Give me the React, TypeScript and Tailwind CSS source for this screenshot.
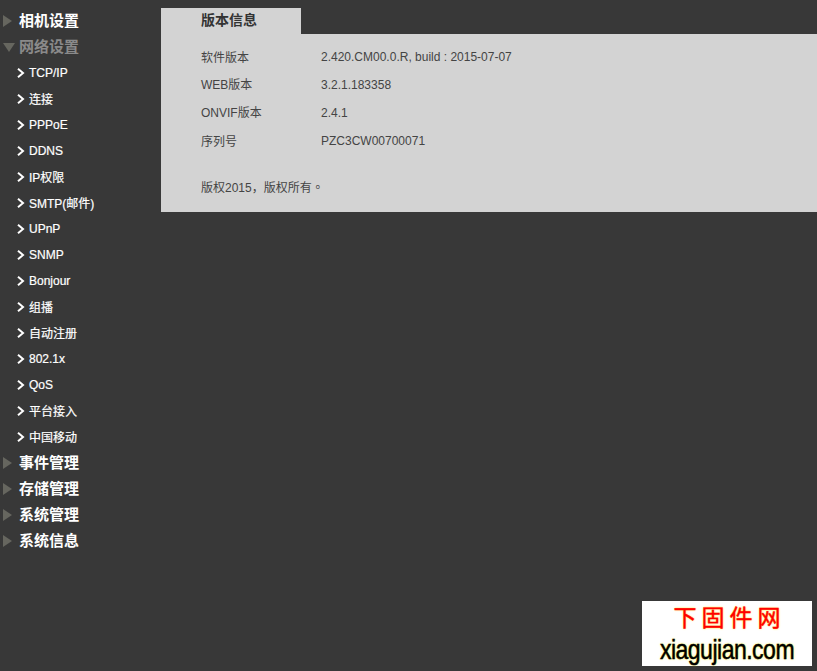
import { FC } from "react";

const FONT = "font-['Liberation_Sans','Noto_Sans_CJK_SC',sans-serif]";

const subItems = [
  "TCP/IP",
  "连接",
  "PPPoE",
  "DDNS",
  "IP权限",
  "SMTP(邮件)",
  "UPnP",
  "SNMP",
  "Bonjour",
  "组播",
  "自动注册",
  "802.1x",
  "QoS",
  "平台接入",
  "中国移动",
];

const versionRows = [
  ["软件版本", "2.420.CM00.0.R, build : 2015-07-07"],
  ["WEB版本", "3.2.1.183358"],
  ["ONVIF版本", "2.4.1"],
  ["序列号", "PZC3CW00700071"],
];

// the CJK fallback sits a pixel higher than in the original page
const hasCjk = (s: string) => /[^\x00-\x7f]/.test(s);
const isAllCjk = (s: string) => /^[^\x00-\x7f]+$/.test(s);

const Section: FC<{ label: string; open?: boolean }> = ({ label, open }) => (
  <div className="flex h-[26px] items-center">
    {open ? (
      <span className="ml-[3px] h-0 w-0 border-x-[6px] border-t-[9px] border-x-transparent border-t-[#66665f]" />
    ) : (
      <span className="ml-[3px] h-0 w-0 border-y-[6px] border-l-[9px] border-y-transparent border-l-[#66665f]" />
    )}
    <span
      className={`text-[15px] font-bold ${open ? "ml-[4px] text-[#8a8a8a]" : "ml-[7px] text-white"}`}
    >
      {label}
    </span>
  </div>
);

const SubItem: FC<{ label: string }> = ({ label }) => (
  <div className="flex h-[26px] items-center pl-[17px]">
    <svg width="8" height="10" viewBox="0 0 8 10" className="shrink-0">
      <path d="M1 0.8 L6 5 L1 9.2" fill="none" stroke="#ffffff" strokeWidth="2" />
    </svg>
    <span
      className={`ml-[4px] text-xs text-white [-webkit-text-stroke:0.2px_white] ${hasCjk(label) ? "pt-[2px]" : ""}`}
    >
      {label}
    </span>
  </div>
);

export default function App() {
  return (
    <div className={`${FONT} relative flex h-[671px] w-[817px] overflow-hidden bg-[#383838]`}>
      <aside className="w-[161px] shrink-0 pt-2">
        <Section label="相机设置" />
        <Section label="网络设置" open />
        {subItems.map((item) => (
          <SubItem key={item} label={item} />
        ))}
        <Section label="事件管理" />
        <Section label="存储管理" />
        <Section label="系统管理" />
        <Section label="系统信息" />
      </aside>

      <main className="flex-1 pt-2">
        <div className="flex h-[26px] w-[140px] items-center bg-[#d3d3d3] pb-[2px] pl-10 text-sm font-bold text-[#333333]">
          版本信息
        </div>
        <div className="h-[178px] bg-[#d3d3d3] pl-10 pt-[9px] text-xs text-[#444444]">
          {versionRows.map(([label, value]) => (
            <div key={label} className="flex h-7 items-center">
              <span className={`w-[120px] ${isAllCjk(label) ? "pt-[2px]" : ""}`}>{label}</span>
              <span>{value}</span>
            </div>
          ))}
          <p className="mt-[18px] leading-7">
            版权2015，版权所有
            <span className="font-['Noto_Sans_CJK_TC',sans-serif]">。</span>
          </p>
        </div>
      </main>

      <div className="absolute left-[642px] top-[601px] flex h-[65px] w-[170px] flex-col items-center bg-white">
        <div className="mt-[3px] flex h-[28px] items-center gap-[5px] text-[23px] leading-none text-[#ff0000] [-webkit-text-stroke:0.4px_#ff0000] [text-shadow:0_0_2px_#ffe000]">
          <span>下</span>
          <span>固</span>
          <span>件</span>
          <span>网</span>
        </div>
        <div className="mt-[1px] scale-y-[1.2] text-[23px] leading-[32px] tracking-[-0.5px] text-black [-webkit-text-stroke:0.4px_black] [text-shadow:0_0_2px_#ffee00]">
          xiagujian.com
        </div>
      </div>
    </div>
  );
}
